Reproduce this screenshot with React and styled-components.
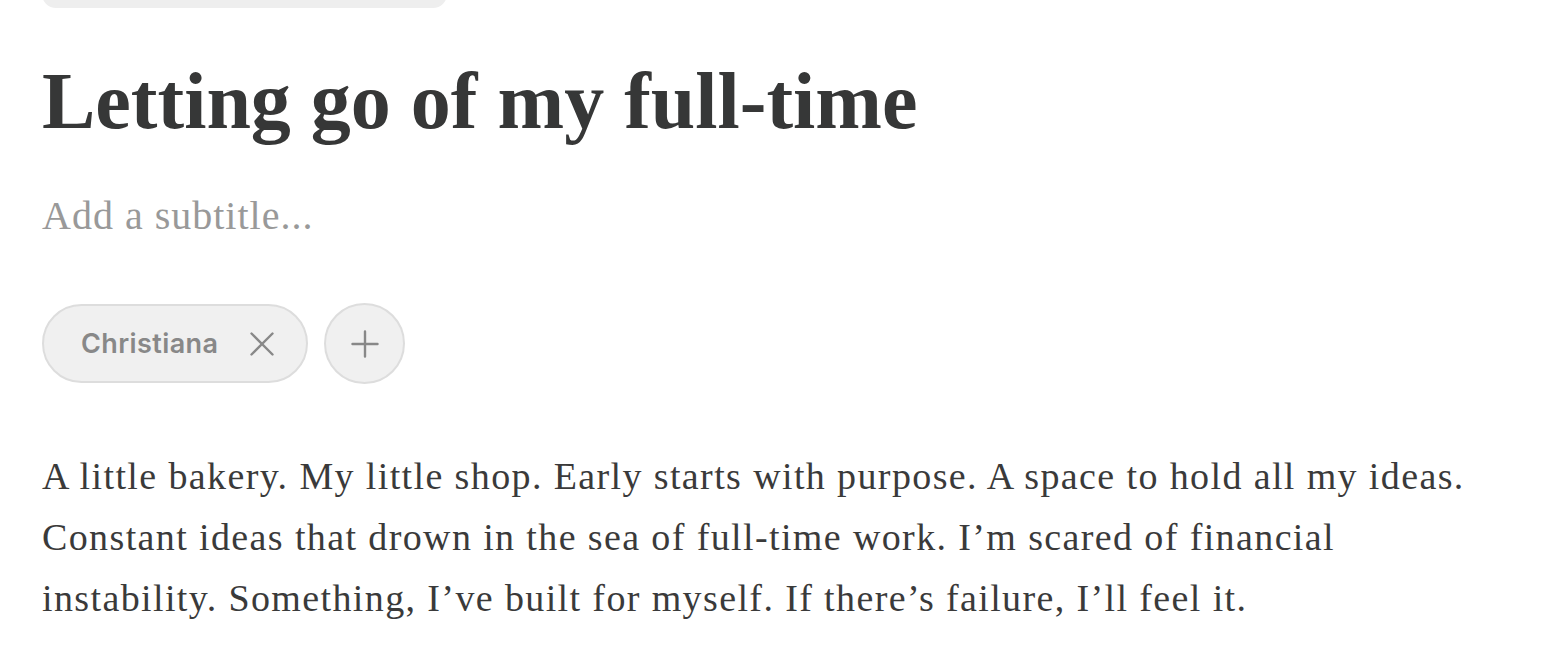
import React from "react";
import styled, { createGlobalStyle } from "styled-components";

const GlobalStyle = createGlobalStyle`
  html, body {
    margin: 0;
    padding: 0;
    background: #ffffff;
    overflow: hidden;
  }
`;

const Page = styled.div`
  padding: 0 42px;
  display: flex;
  flex-direction: column;
  align-items: flex-start;
`;

const TopBar = styled.div`
  width: 405px;
  height: 40px;
  margin-top: -32px;
  border-radius: 14px;
  background: #eeeeee;
`;

const Title = styled.h1`
  margin: 48px 0 0;
  font-family: "Liberation Serif", serif;
  font-weight: 700;
  font-size: 80px;
  line-height: 90px;
  color: #363737;
`;

const Subtitle = styled.div`
  margin-top: 45px;
  font-family: "Liberation Serif", serif;
  font-size: 40px;
  letter-spacing: 1px;
  line-height: 50px;
  color: #999999;
`;

const Bylines = styled.div`
  margin-top: 62px;
  display: flex;
  gap: 16px;
  align-items: center;
`;

const Chip = styled.div`
  display: flex;
  align-items: center;
  gap: 32px;
  height: 79px;
  box-sizing: border-box;
  padding: 0 32px 0 37px;
  border: 2px solid #dddddd;
  border-radius: 40px;
  background: #f0f0f0;
  font-family: Inter, "Noto Sans", sans-serif;
  font-weight: 600;
  font-size: 27px;
  letter-spacing: 0.4px;
  color: #888888;
`;

const RoundButton = styled.div`
  width: 81px;
  height: 81px;
  box-sizing: border-box;
  border: 2px solid #dddddd;
  border-radius: 50%;
  background: #f0f0f0;
  display: flex;
  align-items: center;
  justify-content: center;
`;

const Body = styled.p`
  margin: 62px 0 0;
  width: 1470px;
  font-family: "Liberation Serif", serif;
  font-size: 38px;
  letter-spacing: 1.38px;
  line-height: 61px;
  color: #3a3a3a;
`;

const CloseIcon = () => (
  <svg width="24" height="24" viewBox="0 0 24 24" fill="none">
    <path d="M1.5 1.5L22.5 22.5M22.5 1.5L1.5 22.5" stroke="#888888" strokeWidth="2.4" strokeLinecap="round" />
  </svg>
);

const PlusIcon = () => (
  <svg width="28" height="28" viewBox="0 0 28 28" fill="none">
    <path d="M14 1.5V26.5M1.5 14H26.5" stroke="#888888" strokeWidth="2.4" strokeLinecap="round" />
  </svg>
);

export default function App() {
  return (
    <>
      <GlobalStyle />
      <Page>
        <TopBar />
        <Title>Letting go of my full-time</Title>
        <Subtitle>Add a subtitle...</Subtitle>
        <Bylines>
          <Chip>
            Christiana
            <CloseIcon />
          </Chip>
          <RoundButton>
            <PlusIcon />
          </RoundButton>
        </Bylines>
        <Body>
          A little bakery. My little shop. Early starts with purpose. A space to
          hold all my ideas. Constant ideas that drown in the sea of full-time
          work. I’m scared of financial instability. Something, I’ve built for
          myself. If there’s failure, I’ll feel it.
        </Body>
      </Page>
    </>
  );
}
